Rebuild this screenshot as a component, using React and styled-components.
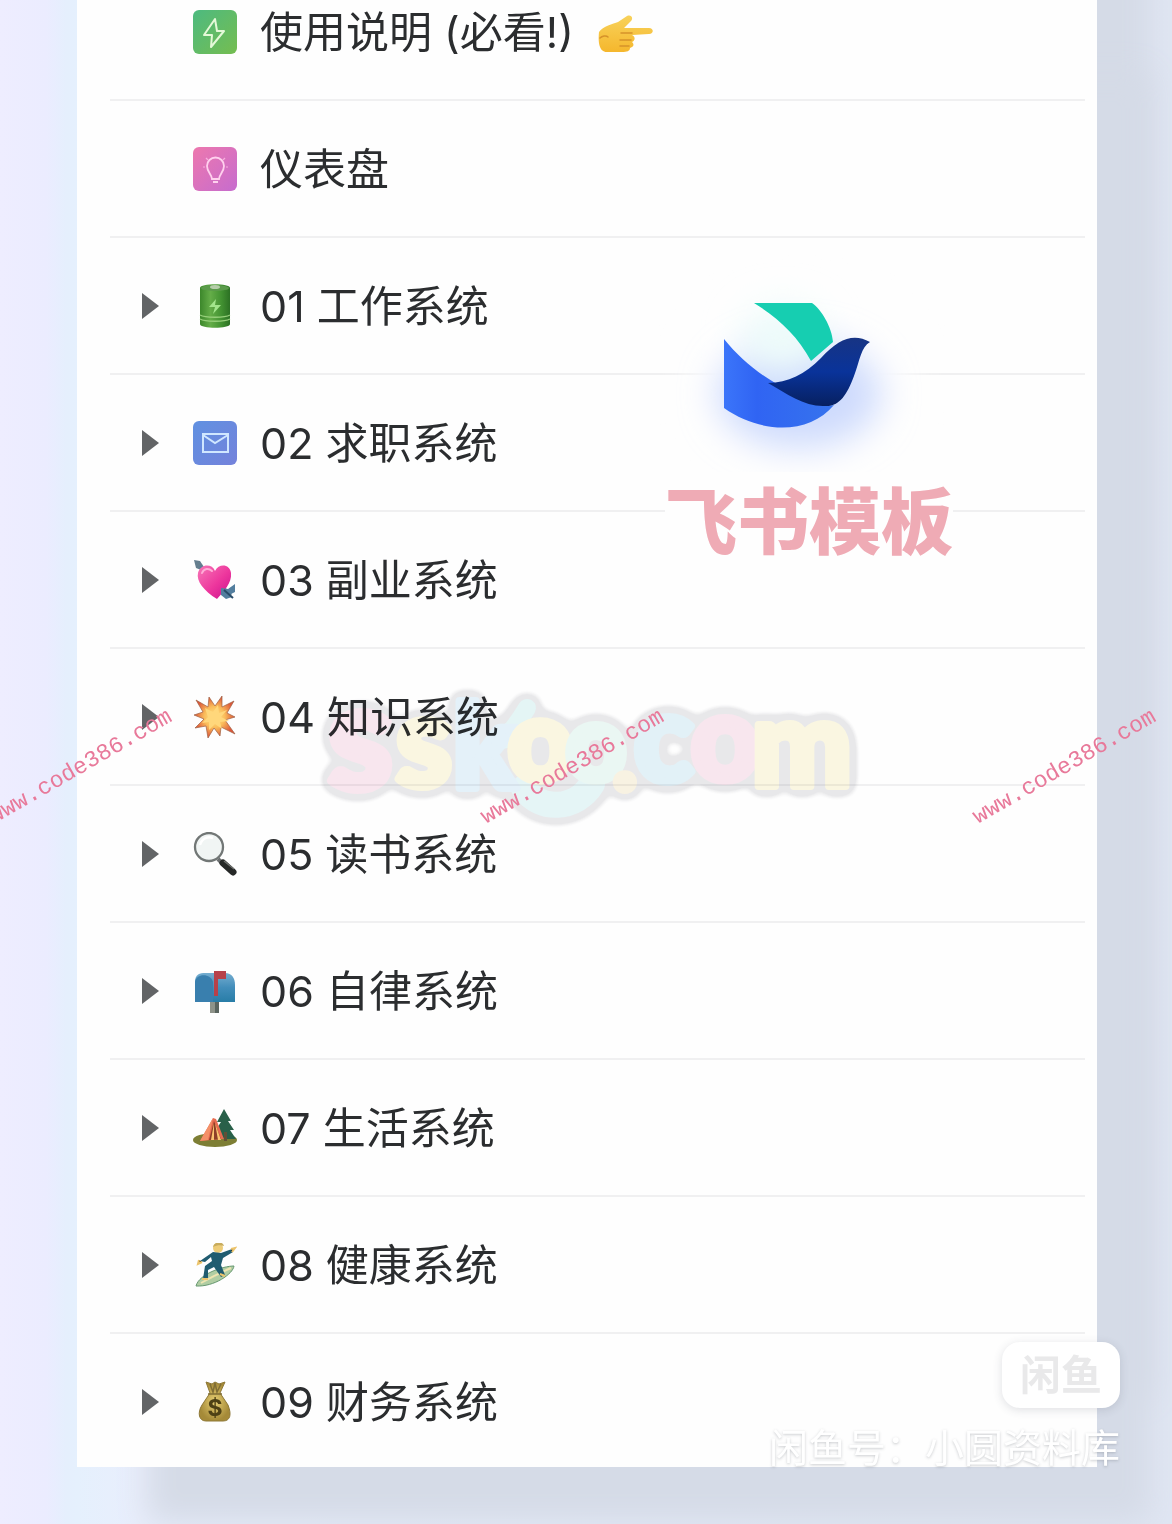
import * as React from "react"
import styled, {createGlobalStyle} from "styled-components"

const GlobalStyle = createGlobalStyle`
  body{
    margin: 0;
    background: #e9edfb;
    font-family: Inter, "Noto Sans CJK SC", sans-serif;
    color: #2b2d2f;
  }
  *{
    box-sizing: border-box;
  }
`;

const Page = styled.div`
  position: relative;
  overflow: hidden;
  padding: 0 75px 57px 77px;
  background: linear-gradient(90deg, #eeedff 0, #ebecff 46px, #e5effd 66px, #e5f0fd 77px, #e9eefc 140px, #e0e6f3 100%);
`

const Panel = styled.main`
  position: relative;
  padding: 0 12px 0 33px;
  background: #fefefe;
  box-shadow: 62px 64px 30px -8px #d5dbe7, 62px -60px 30px -8px #d5dbe7;
`

const List = styled.ul`
  list-style: none;
  margin: 0;
  padding: 0;
`

const Row = styled.li`
  display: grid;
  grid-template-columns: 28px 44px 1fr;
  column-gap: 23px;
  align-items: center;
  padding: 38px 0 37px 32px;
  border-bottom: 2px solid #f0f0f1;
  &:first-child{
    padding-top: 2px;
  }
  &:last-child{
    padding-bottom: 35px;
    border-bottom: none;
  }
`

const Toggle = styled.button`
  display: flex;
  width: 18px;
  height: 28px;
  padding: 0;
  border: none;
  background: none;
  cursor: pointer;
`

const IconBox = styled.svg`
  display: block;
  grid-column: 2;
  width: 44px;
  height: 44px;
`

const RowLink = styled.a`
  grid-column: 3;
  display: flex;
  align-items: center;
  gap: 24px;
  font-size: 43px;
  line-height: 60px;
  color: inherit;
  text-decoration: none;
`

const Brand = styled.div`
  position: absolute;
  top: 272px;
  right: 144px;
  display: flex;
  flex-direction: column;
  align-items: center;
`

const BrandName = styled.p`
  margin: 0;
  background: #fefefe;
  font-size: 72px;
  line-height: 100px;
  font-weight: 900;
  color: #efabb5;
`

const SiteMark = styled.svg`
  position: absolute;
  top: 670px;
  left: 233px;
  width: 560px;
  height: 170px;
  mix-blend-mode: multiply;
  opacity: 0.9;
  font-family: Lato, sans-serif;
  font-weight: 900;
  pointer-events: none;
`

const UrlMark = styled.span`
  position: absolute;
  top: 753px;
  left: ${(props) => props.$left};
  font-family: "Liberation Mono", monospace;
  font-size: 23px;
  line-height: 28px;
  color: #e8799a;
  transform: rotate(-30deg);
  pointer-events: none;
`

const Seller = styled.footer`
  position: absolute;
  right: 52px;
  bottom: 46px;
  display: flex;
  flex-direction: column;
  align-items: flex-end;
  gap: 10px;
`

const SellerBadge = styled.div`
  padding: 3px 18px;
  border-radius: 18px;
  background: #fff;
  box-shadow: 0 2px 10px rgba(60, 70, 90, 0.16);
  font-size: 41px;
  line-height: 60px;
  font-weight: 700;
  color: #e9e9ea;
`

const SellerName = styled.p`
  margin: 0;
  font-size: 39px;
  line-height: 60px;
  color: #fff;
  text-shadow: 0 1px 3px rgba(90, 95, 105, 0.32);
`

const Icon = ({children}) => (
  <IconBox viewBox="0 0 44 44" aria-hidden="true">{children}</IconBox>
)

const BoltIcon = () => (
  <Icon>
    <defs>
      <linearGradient id="bolt" x1="0" y1="0" x2="1" y2="1">
        <stop offset="0" stopColor="#4dba80" />
        <stop offset="1" stopColor="#75bd50" />
      </linearGradient>
    </defs>
    <rect width="44" height="44" rx="6" fill="url(#bolt)" />
    <path d="M22 9 11 25h8l-1 12 13-16h-7z" fill="none" stroke="#e4f9d8" strokeWidth="2" strokeLinejoin="round" />
  </Icon>
)

const BulbIcon = () => (
  <Icon>
    <defs>
      <linearGradient id="bulb" x1="0" y1="0" x2="1" y2="1">
        <stop offset="0" stopColor="#ed78ae" />
        <stop offset="1" stopColor="#c66cce" />
      </linearGradient>
    </defs>
    <rect width="44" height="44" rx="6" fill="url(#bulb)" />
    <path d="M19 32c0-4-5-7-5-13a8 8 0 0 1 17 0c0 6-5 9-5 13zM20 35h5" fill="none" stroke="#ffd1ee" strokeWidth="1.8" />
    <path d="M13 11l2 2M32 11l-2 2M10 20h2M33 20h2" fill="none" stroke="#f7b0dd" strokeWidth="1.2" />
  </Icon>
)

const BatteryIcon = () => (
  <Icon>
    <defs>
      <linearGradient id="battery">
        <stop offset="0" stopColor="#3c872b" />
        <stop offset=".35" stopColor="#64ad48" />
        <stop offset=".7" stopColor="#439332" />
        <stop offset="1" stopColor="#2c7124" />
      </linearGradient>
    </defs>
    <path d="M7 4c0-5 30-5 30 0v36c0 5-30 5-30 0z" fill="url(#battery)" />
    <ellipse cx="22" cy="4" rx="14" ry="3" fill="#5b9b4b" />
    <ellipse cx="22" cy="3" rx="5" ry="2" fill="#b5cda9" />
    <path d="M7 31c5 3 25 3 30 0M7 35c5 3 25 3 30 0" fill="none" stroke="#97cf7b" strokeWidth="1.3" />
    <path d="m23 15-7 8h6l-2 7 8-9h-6z" fill="#a2e58b" />
  </Icon>
)

const MailIcon = () => (
  <Icon>
    <defs>
      <linearGradient id="mail" x1="0" y1="0" x2="1" y2="1">
        <stop offset="0" stopColor="#6091e1" />
        <stop offset="1" stopColor="#7482db" />
      </linearGradient>
    </defs>
    <rect width="44" height="44" rx="6" fill="url(#mail)" />
    <path d="M10 13h25v18H10zM10 14l12 8 13-8" fill="none" stroke="#d0e7ff" strokeWidth="2" />
  </Icon>
)

const HeartIcon = () => (
  <Icon>
    <defs>
      <linearGradient id="heart" x1="0" y1="0" x2="1" y2="1">
        <stop offset="0" stopColor="#f777b7" />
        <stop offset=".55" stopColor="#ed369d" />
        <stop offset="1" stopColor="#c9128c" />
      </linearGradient>
    </defs>
    <path d="m1 2 6 1 4 6-3 3-5-2z" fill="#657e8e" />
    <path d="M7 8 38 37" stroke="#587e94" strokeWidth="3" />
    <path d="M24 41C11 33 3 23 5 15 7 6 19 5 22 13c4-8 15-7 16 2 1 10-7 18-14 26z" fill="url(#heart)" />
    <path d="M9 15c2-5 7-5 10-2" fill="none" stroke="#ffadd7" strokeWidth="2" strokeLinecap="round" />
    <path d="m28 30 7 1 7-5v8l-6 3 3 2-6 2-5-4z" fill="#537e9e" />
    <path d="m31 32 9 8" stroke="#294b68" strokeWidth="2" />
  </Icon>
)

const BurstIcon = () => (
  <Icon>
    <defs>
      <radialGradient id="burst">
        <stop offset="0" stopColor="#ffe78e" />
        <stop offset=".5" stopColor="#fabd5b" />
        <stop offset="1" stopColor="#dd5539" />
      </radialGradient>
    </defs>
    <path d="m3 5 12 7 1-10 6 9 7-10v11l12-6-7 12 8 4-10 3 10 14-14-7-1 9-6-8-6 10-2-12-11 2 9-9-10-4 9-3z" fill="url(#burst)" stroke="#9c6044" strokeWidth=".7" />
    <path d="m12 13 8 4 5-7 1 8 8-3-6 7 8 4-9 1 2 7-7-5-6 6v-8l-7 1 6-6z" fill="#ffd77b" />
  </Icon>
)

const SearchIcon = () => (
  <Icon>
    <path d="m25 27 5 5" stroke="#6c6f70" strokeWidth="4" />
    <path d="m30 31 10 9" stroke="#252827" strokeWidth="7" strokeLinecap="round" />
    <path d="m31 29 10 8" stroke="#70726f" strokeWidth="1.5" />
    <circle cx="16" cy="15" r="14" fill="#f1f5f4" stroke="#727776" strokeWidth="2.3" />
    <path d="M7 13c2-7 8-9 13-7" fill="none" stroke="#fff" strokeWidth="2.5" />
  </Icon>
)

const MailboxIcon = () => (
  <Icon>
    <defs>
      <linearGradient id="mailbox" x1="0" y1="0" x2="0" y2="1">
        <stop offset="0" stopColor="#74add0" />
        <stop offset=".5" stopColor="#428dba" />
        <stop offset="1" stopColor="#287da7" />
      </linearGradient>
    </defs>
    <path d="M17 31h9v13h-9z" fill="#8e9389" />
    <path d="M22 31h4v13h-4z" fill="#5a655f" />
    <path d="M2 33V13c0-8 5-9 10-9h20c7 0 10 5 10 12v17z" fill="url(#mailbox)" />
    <path d="M2 33V13C3 4 18 4 20 13v20z" fill="#397fae" />
    <path d="M21 27V2h12v8h-8v17z" fill="#b7414a" />
  </Icon>
)

const CampIcon = () => (
  <Icon>
    <ellipse cx="22" cy="34" rx="22" ry="7" fill="#7d7e34" />
    <path d="m31 3-7 13h4l-6 9h5l-5 8h21l-6-9h4l-6-9h3z" fill="#296049" />
    <path d="M31 26h3v9h-3z" fill="#624f36" />
    <path d="m20 12 3 1 8 20-24 2z" fill="#e86b50" />
    <path d="m20 12-13 23 8-1z" fill="#f49068" />
    <path d="m21 15-5 19 12-1z" fill="#8d3f28" />
    <path d="m21 17-3 17h3zM22 17l3 17h3z" fill="#fac36f" />
  </Icon>
)

const SurfIcon = () => (
  <Icon>
    <path d="M3 43c3-12 27-20 38-20-1 8-20 21-38 20z" fill="#b0cda3" stroke="#669871" strokeWidth="1" />
    <path d="M8 40c9-5 21-11 30-15" stroke="#efe5b1" strokeWidth="2" />
    <circle cx="25" cy="5" r="5" fill="#edcc78" />
    <path d="M20 4c1-6 10-6 11-1-3-1-7-1-11 1z" fill="#c8ac5d" />
    <path d="m20 9 8 1 11-4 1 3-10 6-2 7 4 10-4 2-7-10-6 3v9h-5l2-13 7-5-1-4-6 5-5-1z" fill="#205c70" />
    <path d="m6 17-1 4 4-2M38 6l4-1-3 4M9 36h6M27 31l5 2" stroke="#ecc46c" strokeWidth="2" />
  </Icon>
)

const MoneyIcon = () => (
  <Icon>
    <defs>
      <radialGradient id="money">
        <stop offset="0" stopColor="#e7cf73" />
        <stop offset="1" stopColor="#a58a38" />
      </radialGradient>
    </defs>
    <path d="m13 2 6 2 3-2 4 2 6-2-5 11 8 12c4 10 2 16-5 16H13C6 41 4 33 9 25l8-12z" fill="url(#money)" stroke="#8e7837" />
    <path d="m17 4 3 8 2-9 2 9 4-8M15 14h14" fill="none" stroke="#806e35" strokeWidth="1.5" />
    <text x="22" y="36" textAnchor="middle" fontSize="23" fontWeight="700" fill="#4e4115">$</text>
  </Icon>
)

const HandIcon = () => (
  <svg width="56" height="44" viewBox="0 0 56 44" aria-hidden="true">
    <defs>
      <linearGradient id="hand" x1="0" y1="0" x2="0" y2="1">
        <stop offset="0" stopColor="#f8d25b" />
        <stop offset="1" stopColor="#f5b72d" />
      </linearGradient>
    </defs>
    <path d="M1 22c4-6 14-8 19-10l9-6c5-2 7 3 3 6l-6 6h25c5 0 5 6 0 6l-17 1c4 2 3 6 0 7 3 3 1 5-2 6 0 3-3 4-8 4H9c-8 0-9-10-8-20z" fill="url(#hand)" />
    <path d="M34 23H23M33 30H22M31 36h-9M2 28c2-2 6-3 8-1" fill="none" stroke="#d6922a" strokeWidth="1.5" strokeLinecap="round" />
  </svg>
)

const BirdLogo = () => (
  <svg width="284" height="200" viewBox="668 272 284 200" overflow="visible" aria-hidden="true">
    <defs>
      <filter id="soft" x="-60%" y="-60%" width="220%" height="220%">
        <feGaussianBlur stdDeviation="18" />
      </filter>
      <linearGradient id="body">
        <stop offset="0" stopColor="#3b75fa" />
        <stop offset=".3" stopColor="#3064f3" />
        <stop offset="1" stopColor="#3673ed" />
      </linearGradient>
      <linearGradient id="wing" x1="0" y1="0" x2="0" y2="1">
        <stop offset="0" stopColor="#173484" />
        <stop offset=".5" stopColor="#09339a" />
        <stop offset="1" stopColor="#072060" />
      </linearGradient>
    </defs>
    <ellipse cx="803" cy="374" rx="110" ry="76" fill="#fefefe" filter="url(#soft)" />
    <ellipse cx="800" cy="394" rx="82" ry="54" fill="#cddafd" filter="url(#soft)" />
    <ellipse cx="784" cy="338" rx="42" ry="34" fill="#eefcfa" filter="url(#soft)" />
    <path d="M755 303h58c9 6 20 24 21 39l-22 19c-14-26-33-43-57-58z" fill="#16ceb1" />
    <path d="M725 339c17 21 37 37 62 50 16 10 33 19 48 16-25 30-73 29-110 3z" fill="url(#body)" />
    <path d="M769 383c20 0 37-9 53-25 18-20 33-25 49-16-9 5-10 18-16 34-7 19-15 31-29 30-20 1-38-12-57-23z" fill="url(#wing)" />
  </svg>
)

const rows = [
  {title: "使用说明 (必看!)", icon: BoltIcon, leaf: true, hand: true},
  {title: "仪表盘", icon: BulbIcon, leaf: true},
  {title: "01 工作系统", icon: BatteryIcon},
  {title: "02 求职系统", icon: MailIcon},
  {title: "03 副业系统", icon: HeartIcon},
  {title: "04 知识系统", icon: BurstIcon},
  {title: "05 读书系统", icon: SearchIcon},
  {title: "06 自律系统", icon: MailboxIcon},
  {title: "07 生活系统", icon: CampIcon},
  {title: "08 健康系统", icon: SurfIcon},
  {title: "09 财务系统", icon: MoneyIcon},
]

const letters = [
  {char: "s", x: 18, y: 119, size: 146, color: "#f9e5ee"},
  {char: "s", x: 86, y: 116, size: 126, color: "#fbf7df"},
  {char: "k", x: 143, y: 118, size: 116, color: "#e2f1fa"},
  {char: "o", x: 198, y: 110, size: 112, color: "#fbf7df"},
  {char: "o", x: 256, y: 110, size: 104, color: "#e9f8f3"},
  {char: ".", x: 303, y: 119, size: 100, color: "#f9f2e0"},
  {char: "c", x: 324, y: 111, size: 122, color: "#e0f1f8"},
  {char: "o", x: 381, y: 110, size: 118, color: "#f9e5ee"},
  {char: "m", x: 442, y: 116, size: 118, color: "#fbf7df"},
]

const Letters = () => (
  <SiteMark viewBox="0 0 560 170">
    <defs>
      <filter id="outline" x="-10%" y="-20%" width="120%" height="140%" colorInterpolationFilters="sRGB">
        <feGaussianBlur in="SourceAlpha" stdDeviation="7" />
        <feComponentTransfer result="grown">
          <feFuncA type="linear" slope="9" intercept="-0.5" />
        </feComponentTransfer>
        <feFlood floodColor="#e7e7e9" />
        <feComposite in2="grown" operator="in" result="edge" />
        <feMerge>
          <feMergeNode in="edge" />
          <feMergeNode in="SourceGraphic" />
        </feMerge>
      </filter>
    </defs>
    <g filter="url(#outline)" strokeLinejoin="round" strokeWidth="8">
      <path d="M214 118c16 24 52 22 68-4" fill="none" stroke="#e4f5f7" strokeWidth="26" strokeLinecap="round" />
      <path d="M217 38c-6 10-12 20-24 32" fill="none" stroke="#e2f5f5" strokeWidth="18" strokeLinecap="round" />
      {letters.map(({char, x, y, size, color}) => (
        <text key={x} x={x} y={y} fontSize={size} fill={color} stroke={color}>{char}</text>
      ))}
    </g>
  </SiteMark>
)

const App = () => {
  return (
    <>
      <GlobalStyle />
      <Page>
        <Panel>
          <List>
            {rows.map(({title, icon: RowIcon, leaf, hand}) => (
              <Row key={title}>
                {!leaf && (
                  <Toggle type="button" aria-label={title}>
                    <svg width="18" height="28" viewBox="0 0 18 28"><path d="M0 1v26l17-13z" fill="#626466" /></svg>
                  </Toggle>
                )}
                <RowIcon />
                <RowLink href="#">{title}{hand && <HandIcon />}</RowLink>
              </Row>
            ))}
          </List>
          <Brand>
            <BirdLogo />
            <BrandName>飞书模板</BrandName>
          </Brand>
          <Letters />
        </Panel>
        <UrlMark $left="-2%">www.code386.com</UrlMark>
        <UrlMark $left="40%">www.code386.com</UrlMark>
        <UrlMark $left="82%">www.code386.com</UrlMark>
        <Seller>
          <SellerBadge>闲鱼</SellerBadge>
          <SellerName>闲鱼号：小圆资料库</SellerName>
        </Seller>
      </Page>
    </>
  )
}

export default App
